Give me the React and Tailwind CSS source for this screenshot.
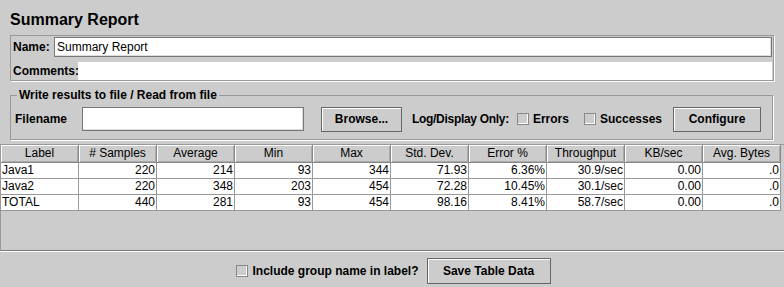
import React from "react";

const columns = ["Label", "# Samples", "Average", "Min", "Max", "Std. Dev.", "Error %", "Throughput", "KB/sec", "Avg. Bytes"];

const rows = [
  ["Java1", "220", "214", "93", "344", "71.93", "6.36%", "30.9/sec", "0.00", ".0"],
  ["Java2", "220", "348", "203", "454", "72.28", "10.45%", "30.1/sec", "0.00", ".0"],
  ["TOTAL", "440", "281", "93", "454", "98.16", "8.41%", "58.7/sec", "0.00", ".0"],
];

function Button({ children, className = "" }) {
  return (
    <div
      className={`flex items-center justify-center h-[25px] border border-[#666] shadow-[inset_1px_1px_0_#fff] bg-[#cccccc] text-[12px] font-bold ${className}`}
    >
      {children}
    </div>
  );
}

function Check({ label }) {
  return (
    <div className="flex items-center gap-[4px]">
      <div className="w-[12px] h-[12px] border border-[#888] shadow-[inset_-1px_-1px_0_#fff] bg-[#cccccc]" />
      <span className="text-[12px] font-bold">{label}</span>
    </div>
  );
}

export default function App() {
  return (
    <div
      className="w-[784px] h-[287px] bg-[#cccccc] text-black overflow-hidden"
      style={{ fontFamily: '"Liberation Sans", Arial, sans-serif' }}
    >
      {/* Title */}
      <div className="h-[35px] pl-[10px] pt-[10px] text-[16px] leading-[19px] font-bold">Summary Report</div>

      {/* Name / comments */}
      <div className="mx-[10px] w-[764px] h-[46px] border border-[#999] shadow-[1px_1px_0_#fff] flex flex-col px-[1px] pt-[1px]">
        <div className="flex items-center h-[20px]">
          <span className="text-[12px] font-bold w-[42px] pl-[1px]">Name:</span>
          <div className="flex-1 h-[20px] bg-white border border-[#777] shadow-[inset_-1px_-1px_0_#ddd] text-[12px] leading-[18px] pl-[2px]">
            Summary Report
          </div>
        </div>
        <div className="flex items-center h-[18px] mt-[5px]">
          <span className="text-[12px] font-bold w-[66px] pl-[1px]">Comments:</span>
          <div className="flex-1 h-[18px] bg-white" />
        </div>
      </div>

      {/* Write results fieldset */}
      <fieldset className="mx-[10px] mt-[7px] w-[763px] h-[52px] border border-[#999] shadow-[1px_1px_0_#fff] px-[4px] pb-0 pt-0">
        <legend className="text-[12px] font-bold px-[2px] ml-[2px] leading-[14px]">Write results to file / Read from file</legend>
        <div className="flex items-center h-[26px] mt-[4px]">
          <span className="text-[12px] font-bold w-[67px]">Filename</span>
          <div className="w-[222px] h-[24px] bg-white border border-[#777] shadow-[inset_-1px_-1px_0_#ddd]" />
          <Button className="w-[81px] ml-[17px]">Browse...</Button>
          <span className="text-[12px] font-bold ml-[10px] tracking-[-0.3px]">Log/Display Only:</span>
          <div className="ml-[8px]">
            <Check label="Errors" />
          </div>
          <div className="ml-[15px]">
            <Check label="Successes" />
          </div>
          <Button className="w-[88px] ml-[11px]">Configure</Button>
        </div>
      </fieldset>

      {/* Table */}
      <div className="mt-[4px] w-[784px] h-[107px] border-t border-l border-[#999] border-b-0 shadow-[0_1px_0_#fff] relative">
        <div className="grid grid-cols-[repeat(10,78px)] text-[12px]">
          {columns.map((c) => (
            <div
              key={c}
              className="h-[18px] leading-[16px] text-center border-r border-b border-[#888] shadow-[inset_1px_1px_0_#fff,inset_-1px_-1px_0_#aaa] bg-[#cccccc]"
            >
              {c}
            </div>
          ))}
          {rows.map((r) =>
            r.map((v, i) => (
              <div
                key={r[0] + i}
                className={`h-[16px] leading-[15px] bg-white border-r border-b border-[#999] px-[1px] ${i === 0 ? "text-left" : "text-right"}`}
              >
                {v}
              </div>
            ))
          )}
        </div>
        <div className="absolute left-0 right-0 bottom-0 h-[1px] bg-[#777]" />
      </div>

      {/* Bottom controls */}
      <div className="flex items-center justify-center gap-[8px] mt-[7px] pl-[3px]">
        <Check label="Include group name in label?" />
        <Button className="w-[124px] h-[26px]">Save Table Data</Button>
      </div>
    </div>
  );
}
